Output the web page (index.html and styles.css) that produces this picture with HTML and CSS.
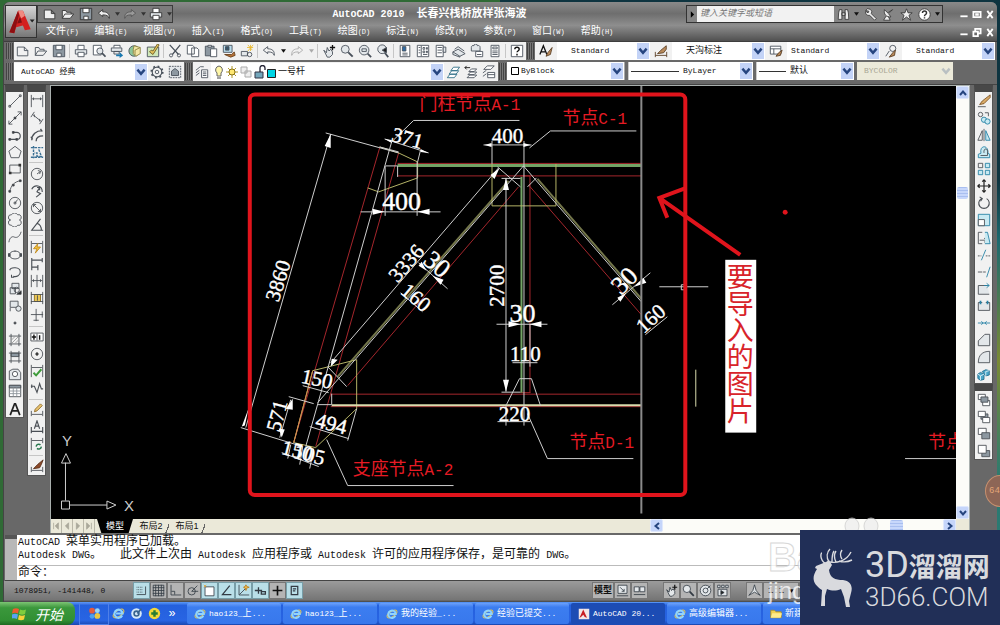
FILE: index.html
```html
<!DOCTYPE html>
<html lang="zh-CN">
<head>
<meta charset="utf-8">
<title>AutoCAD 2010</title>
<link rel="stylesheet" href="styles.css">
</head>
<body>
<svg class="defs" aria-hidden="true">
  <symbol id="new" viewBox="0 0 16 16"><path d="M1.500 3.500h8l4 4v6h-12zM9.500 3.500v4h4"/></symbol>
  <symbol id="open" viewBox="0 0 16 16"><path d="M1.500 13V4h4l1 2h5v2M1.500 13l3-5h10l-4 5z"/></symbol>
  <symbol id="save" viewBox="0 0 16 16"><path class="fg" d="M1.500 1.500h13v13h-13z"/><path class="fw" d="M4.500 1.500h7v5h-7zM5.500 10.500h5v4h-5z"/></symbol>
  <symbol id="print" viewBox="0 0 16 16"><path class="fw" d="M4.500 6V1.500h7V6"/><path class="fl" d="M1.500 6.500h13v5h-13z"/><path class="fw" d="M4.500 9.500h7v5h-7z"/></symbol>
  <symbol id="undo" viewBox="0 0 16 16"><path d="M1.500 7l5-4v2.500c5 0 8 2 7.500 7.500-1-3-3-4-7.500-4V11z"/></symbol>
  <symbol id="redo" viewBox="0 0 16 16"><path d="M14.500 7l-5-4v2.500c-5 0-8 2-7.500 7.500 1-3 3-4 7.500-4V11z"/></symbol>
  <symbol id="dd" viewBox="0 0 6 4"><path d="M0 0h6L3 4z" fill="currentColor" stroke="none"/></symbol>
  <symbol id="chev" viewBox="0 0 10 10"><path d="M2 3l3 3.500L8 3" fill="none" stroke="#26457f" stroke-width="2"/></symbol>
  <symbol id="glass" viewBox="0 0 16 16"><circle class="fl" cx="6" cy="6" r="4.500"/><path d="M9.500 9.500l5 5" stroke-width="2.200"/></symbol>
  <symbol id="layers" viewBox="0 0 16 16"><path class="fw" d="M1.500 14.500l3-4h8l-3 4zM3.500 10.500l3-4h8l-3 4zM5.500 6.500l3-4h7l-3 4z"/></symbol>
  <symbol id="ie" viewBox="0 0 16 16"><ellipse cx="8" cy="8" rx="7.500" ry="3.500" transform="rotate(-35 8 8)" fill="none" stroke="#e9c64b" stroke-width="1.300"/><path d="M12.500 10.500A5 5 0 1 1 13 8H5" fill="none" stroke="#8fd4ff" stroke-width="2.600"/></symbol>
</svg>

<div class="desktop">
<div class="window">
  <header class="title">
    <button class="appbtn" aria-label="应用程序菜单"><svg viewBox="0 0 30 32"><path d="M3 27L12 5h5l8 19-6 1-2-5-7 2-2 6z" fill="#d3201f"/><path d="M3 27L12 5l1 4-5 19z" fill="#8d0f12"/><path d="M12 5h5l2 5-4 3z" fill="#f08a80"/><path d="M11 18l3-7 2 6z" fill="#7c1013"/><path d="M24 14h5l-2.500 3z" fill="#222"/></svg></button>
    <div class="head">
      <div class="captions">
        <div class="qat">
          <button aria-label="新建"><svg><use href="#new"/></svg></button>
          <button aria-label="打开"><svg><use href="#open"/></svg></button>
          <button aria-label="保存"><svg><use href="#save"/></svg></button>
          <button aria-label="放弃"><svg><use href="#undo"/></svg></button>
          <button class="tiny" aria-label="放弃列表"><svg><use href="#dd"/></svg></button>
          <button class="dim" aria-label="重做"><svg><use href="#redo"/></svg></button>
          <button class="tiny" aria-label="重做列表"><svg><use href="#dd"/></svg></button>
          <button aria-label="打印"><svg><use href="#print"/></svg></button>
          <button class="tiny dark" aria-label="自定义"><svg><use href="#dd"/></svg></button>
        </div>
        <h1><span>AutoCAD&nbsp;2010&nbsp;&nbsp;</span>长春兴栈桥放样张海波</h1>
        <div class="info">
          <button class="go" aria-label="搜索选项"><svg viewBox="0 0 6 8"><path d="M1 0l4 4-4 4z" fill="#000"/></svg></button>
          <input type="text" aria-label="搜索" placeholder="键入关键字或短语">
          <button aria-label="搜索"><svg viewBox="0 0 16 16"><path class="fd" d="M2 6l1-4h3v12H1.500zM14 6l-1-4h-3v12h4.500zM6 6h4v3H6z"/></svg></button>
          <button class="tiny" aria-label="范围"><svg><use href="#dd"/></svg></button>
          <button aria-label="速博"><svg viewBox="0 0 16 16"><path class="fd" d="M2 3a4 4 0 0 1 7 4l6 6-2 2-6-6a4 4 0 0 1-5-5l3 2 1-2z"/></svg></button>
          <button aria-label="通讯中心"><svg viewBox="0 0 16 16"><path class="fd" d="M3 2c-1 6 2 9 8 9L8 7l5-5-6 4zM5 10l-3 5h8l-2-4"/></svg></button>
          <button aria-label="收藏夹"><svg viewBox="0 0 16 16"><path class="fd" d="M8 1l2 5h5l-4 3 2 6-5-4-5 4 2-6-4-3h5z"/></svg></button>
          <button aria-label="帮助"><svg viewBox="0 0 16 16"><circle cx="8" cy="8" r="7" fill="#fff" stroke="#333"/><path d="M5.500 6c0-3 5-3 5 0 0 2-2.500 2-2.500 4M8 11.500v1.500" fill="none" stroke="#333" stroke-width="1.800"/></svg></button>
          <button class="tiny" aria-label="帮助列表"><svg><use href="#dd"/></svg></button>
        </div>
        <div class="winctl">
          <button aria-label="最小化"><svg viewBox="0 0 10 10"><path d="M1 7h8"/></svg></button>
          <button aria-label="最大化"><svg viewBox="0 0 10 10"><path d="M1 2h8v6H1zM4 4.500h2v1H4z"/></svg></button>
          <button aria-label="关闭"><svg viewBox="0 0 10 10"><path d="M2 1l6 8M8 1L2 9"/></svg></button>
        </div>
      </div>
      <nav class="menu">
        <button>文件<small>(F)</small></button><button>编辑<small>(E)</small></button><button>视图<small>(V)</small></button><button>插入<small>(I)</small></button><button>格式<small>(O)</small></button><button>工具<small>(T)</small></button><button>绘图<small>(D)</small></button><button>标注<small>(N)</small></button><button>修改<small>(M)</small></button><button>参数<small>(P)</small></button><button>窗口<small>(W)</small></button><button>帮助<small>(H)</small></button>
        <div class="winctl">
          <button aria-label="最小化图形"><svg viewBox="0 0 10 10"><path d="M1 7h8"/></svg></button>
          <button aria-label="还原图形"><svg viewBox="0 0 10 10"><path d="M1 4h5v5H1zM3 3V1h6v5H7"/></svg></button>
          <button aria-label="关闭图形"><svg viewBox="0 0 10 10"><path d="M2 1l6 8M8 1L2 9"/></svg></button>
        </div>
      </nav>
    </div>
  </header>

  <div class="bar">
    <i class="grip"></i>
    <div class="tools">
      <button aria-label="新建"><svg><use href="#new"/></svg></button>
      <button aria-label="打开"><svg><use href="#open"/></svg></button>
      <button aria-label="保存"><svg><use href="#save"/></svg></button>
      <hr>
      <button aria-label="打印"><svg><use href="#print"/></svg></button>
      <button aria-label="打印预览"><svg viewBox="0 0 16 16"><path class="fw" d="M1.500 1.500h9v11h-9z"/><circle class="fl" cx="9" cy="8" r="3.500"/><path d="M11.500 10.500l4 4" stroke-width="2"/></svg></button>
      <button aria-label="发布"><svg viewBox="0 0 16 16"><path class="fw" d="M4.500 4V1.500h7V4"/><path class="fl" d="M1.500 4.500h12v4h-12zM4.500 8.500h6v3h-6z"/><path d="M7 12h4V9l4 4-4 3v-2H7z" fill="#1878b0" stroke="none"/></svg></button>
      <button aria-label="三维"><svg viewBox="0 0 16 16"><circle cx="7" cy="8" r="6" fill="#8cc59a"/><path d="M7 2l7 2v7l-5 3-3-3V6z" fill="#f3e6a4" stroke="#897f3c"/><path d="M8 7l6-3M8 7v6" stroke="#897f3c"/></svg></button>
      <button aria-label="标记"><svg viewBox="0 0 16 16"><path d="M1.500 3.500h13v11h-13z" fill="#cfe7b8"/><path d="M4 9l4 3 7-11-2-1-5 8-2-1z" fill="#e3c35d" stroke="#6d5a25"/></svg></button>
      <hr>
      <button aria-label="剪切"><svg viewBox="0 0 16 16"><path d="M2 1l10 11M14 1L5 12" stroke-width="1.400"/><circle cx="3.500" cy="13" r="1.800"/><circle cx="12.500" cy="13" r="1.800"/></svg></button>
      <button aria-label="复制"><svg viewBox="0 0 16 16"><path class="fw" d="M1.500 1.500h6l2 2v8h-8zM6.500 4.500h6l2 2v8h-8z"/></svg></button>
      <button aria-label="粘贴"><svg viewBox="0 0 16 16"><path class="fg" d="M1.500 2.500h10v11h-10z"/><path class="fw" d="M4.500 1.500h4v2h-4zM7.500 5.500h7v9h-7z"/></svg></button>
      <button aria-label="特性匹配"><svg viewBox="0 0 16 16"><path d="M1.500 1.500h10v8h-10z" fill="#b8dced"/><path d="M4 3h4v4H4z" fill="#37566b"/><path d="M3 12h8l3-3 1 4-5 2z" fill="#b57239" stroke="#68411d"/></svg></button>
      <button aria-label="块编辑器"><svg viewBox="0 0 16 16"><path class="fl" d="M1.500 8.500h7v5h-7z"/><circle cx="11" cy="12" r="2.500"/><path d="M12 1v7M8 4h7M9 1l5 6M15 1L9 8" stroke="#e8b932"/></svg></button>
      <hr>
      <button aria-label="放弃"><svg><use href="#undo"/></svg></button>
      <button class="tiny dark" aria-label="放弃列表"><svg><use href="#dd"/></svg></button>
      <button class="pale" aria-label="重做"><svg><use href="#redo"/></svg></button>
      <button class="tiny pale" aria-label="重做列表"><svg><use href="#dd"/></svg></button>
      <hr>
      <button aria-label="平移"><svg viewBox="0 0 16 16"><path class="fl" d="M2 7l3 3 1-6 2 4 2-2 2 3v3l-3 3H6z"/><path d="M12 1v6M9 4h6" stroke="#111" stroke-width="1.500"/></svg></button>
      <button aria-label="缩放"><svg><use href="#glass"/></svg></button>
      <button aria-label="窗口缩放"><svg viewBox="0 0 16 16"><circle class="fl" cx="7" cy="7" r="5.500"/><path d="M4.500 5.500h5v3h-5z"/><path d="M11 11l4 4" stroke-width="2"/></svg></button>
      <button aria-label="缩放上一个"><svg viewBox="0 0 16 16"><circle class="fl" cx="7" cy="6" r="5"/><path d="M10 10l4 5" stroke-width="2"/><path d="M12 4L7 7l5 3z" fill="#222"/></svg></button>
      <hr>
      <button aria-label="特性"><svg viewBox="0 0 16 16"><path class="fw" d="M2.500 1.500h11v13h-11z"/><path d="M5 3h4v5H5z" fill="#2e6ba5"/><path d="M5 10.500h6M5 12.500h6"/></svg></button>
      <button aria-label="设计中心"><svg viewBox="0 0 16 16"><path class="fw" d="M1.500 1.500h13v13h-13z"/><path d="M6 2v12M3 4h2M3 7h2M3 10h2M8 4h2v2H8zM12 4h1v2h-1zM8 8h2v2H8zM12 8h1v2h-1zM8 12h5"/></svg></button>
      <button aria-label="工具选项板"><svg viewBox="0 0 16 16"><path class="fw" d="M2.500 1.500h8v13h-8z"/><path class="fl" d="M10.500 3.500h3v6h-3zM4 4h5M4 7h5M4 10h5"/></svg></button>
      <button aria-label="图纸集"><svg viewBox="0 0 16 16"><path class="fl" d="M1 9l6-3 8 5-6 3zM3 6l4-3 7 5M1 9v3l8 3v-1"/></svg></button>
      <button aria-label="标记集"><svg viewBox="0 0 16 16"><path class="fl" d="M1.500 4a2 2 0 0 1 3-2 2 2 0 0 1 4 0 2 2 0 0 1 3 2v4h-10z"/><path class="fw" d="M6.500 8.500h8v6h-8zM8 12h5"/></svg></button>
      <button aria-label="计算器"><svg viewBox="0 0 16 16"><path class="fw" d="M3.500 1.500h9v13h-9z"/><path d="M5.500 3.500h5v2h-5zM5 8h6M5 10h6M5 12h6"/></svg></button>
      <hr>
      <button aria-label="帮助"><svg viewBox="0 0 16 16"><path class="fw" d="M1.500 1.500h13v13h-13z"/><path d="M5.500 6c0-3 5-3 5 0 0 2-2.500 2-2.500 3.500M8 11v2" stroke="#111" stroke-width="1.600"/></svg></button>
    </div>
    <i class="grip"></i>
    <div class="tools styles">
      <button aria-label="文字样式"><svg viewBox="0 0 16 16"><path d="M1 12L5 2l4 10M2 9h5" stroke="#111" stroke-width="1.500"/><path class="fb" d="M15 4l-5 6-2 4 5-2z"/></svg></button>
      <label class="combo"><select aria-label="文字样式"><option>Standard</option></select><svg><use href="#chev"/></svg></label>
      <button aria-label="标注样式"><svg viewBox="0 0 16 16"><path class="fb" d="M14 2l-6 5-4 4 7-1 3-4zM1.500 9v6M14.500 9v6M1.500 13h13"/></svg></button>
      <label class="combo cn"><select aria-label="标注样式"><option>天沟标注</option></select><svg><use href="#chev"/></svg></label>
      <button aria-label="表格样式"><svg viewBox="0 0 16 16"><path class="fw" d="M1.500 2.500h12v9h-12zM1.500 5.500h12M5.500 5.500v6"/><path class="fb" d="M15 7l-4 3-3 4 5-1z"/></svg></button>
      <label class="combo near"><select aria-label="表格样式"><option>Standard</option></select><svg><use href="#chev"/></svg></label>
      <button aria-label="多重引线样式"><svg viewBox="0 0 16 16"><path d="M2 14l4-6"/><circle cx="10" cy="5" r="3.500"/><path class="fb" d="M13 7l-3 3-4 5 6-2z"/></svg></button>
      <label class="combo"><select aria-label="多重引线样式"><option>Standard</option></select><svg><use href="#chev"/></svg></label>
    </div>
  </div>

  <div class="bar second">
    <i class="grip"></i>
    <div class="tools">
      <label class="combo work"><select aria-label="工作空间"><option>AutoCAD 经典</option></select><svg><use href="#chev"/></svg></label>
      <button aria-label="工作空间设置"><svg viewBox="0 0 16 16"><circle cx="8" cy="8" r="5.500" stroke-width="1.300"/><circle cx="8" cy="8" r="6.500" stroke-width="2" stroke-dasharray="2 3.100"/><circle cx="8" cy="8" r="2"/></svg></button>
      <button aria-label="我的工作空间"><svg viewBox="0 0 16 16"><path class="fl" d="M1.500 1.500h13v13h-13z" stroke-dasharray="2 1"/><path class="fg" d="M4 7l4-3 4 3v5H4z"/></svg></button>
    </div>
    <i class="grip"></i>
    <div class="tools layers">
      <button aria-label="图层特性"><svg viewBox="0 0 16 16"><path class="fw" d="M1 6l5-4h4M1 9l4-3M1 12l4-3M7.500 5.500h7v9h-7zM9 8h4M9 10h4M9 12h4"/></svg></button>
      <label class="combo layer">
        <svg viewBox="0 0 66 14"><path d="M8 1a4 4 0 0 1 2 7v3H6V8a4 4 0 0 1 2-7z" fill="#fff7a8" stroke="#666"/><path d="M6 13h4" stroke="#444"/><path d="M21 1v12M15 7h12M17 3l8 8M25 3l-8 8" stroke="#b29a2e"/><circle cx="21" cy="7" r="3" fill="#ffe872" stroke="#8a7416"/><path d="M30 2h6v6h-6zM34 6h6v6h-6z" fill="#eee" stroke="#aaa"/><path d="M44 7h8v6h-8z" fill="#73a6bb" stroke="#334"/><path d="M49 7V3a2 2 0 0 1 5 0v2" fill="none" stroke="#223" stroke-width="1.300"/><path d="M56.500 4.500h8v8h-8z" fill="#00d5e5" stroke="#222"/></svg>
        <select aria-label="图层"><option>一号杆</option></select><svg><use href="#chev"/></svg></label>
      <button class="teal" aria-label="置为当前"><svg><use href="#layers"/></svg></button>
      <button aria-label="上一个图层"><svg viewBox="0 0 16 16"><path class="fw" d="M3.500 14.500l3-3h8l-3 3zM4.500 11l3-3h7l-3 3zM5.500 7.500l3-3h6l-3 3z"/><path d="M1 3h6M3 1L1 3l2 2" stroke="#111"/></svg></button>
      <button aria-label="图层状态"><svg viewBox="0 0 16 16"><path class="fw" d="M2 5l4-4h8l-4 4zM1 9l4-3M1 13l4-3M6.500 8.500h8v6h-8zM6.500 11h8"/></svg></button>
    </div>
    <i class="grip"></i>
    <label class="combo color"><svg viewBox="0 0 10 10"><path d="M1.500 1.500h7v7h-7z" fill="#fff" stroke="#000"/></svg><select aria-label="颜色"><option>ByBlock</option></select><svg><use href="#chev"/></svg></label>
    <label class="combo ltype"><i class="rule"></i><select aria-label="线型"><option>ByLayer</option></select><svg><use href="#chev"/></svg></label>
    <label class="combo cn lweight"><i class="rule"></i><select aria-label="线宽"><option>默认</option></select><svg><use href="#chev"/></svg></label>
    <label class="combo off"><select aria-label="打印样式" disabled><option>BYCOLOR</option></select><svg><use href="#chev"/></svg></label>
  </div>

  <main class="work-area">
    <div class="palette draw">
      <button aria-label="直线"><svg viewBox="0 0 16 16"><path d="M2 14L14 2M1 13h2v2H1zM13 1h2v2h-2z"/></svg></button>
      <button aria-label="构造线"><svg viewBox="0 0 16 16"><path d="M1 15L15 1M15 5V1h-4M1 11v4h4"/><path d="M7 7h2v2H7z" fill="#111"/></svg></button>
      <button aria-label="多段线"><svg viewBox="0 0 16 16"><path d="M1 13h9a4 4 0 0 0 0-8H6" stroke-width="1.300"/><path d="M1 12h2v2H1zM9 12h2v2H9zM5 4h2v2H5z" fill="#333"/></svg></button>
      <button aria-label="多边形"><svg viewBox="0 0 16 16"><path d="M8 1.500l7 5.500-2.500 7.500h-9L1 7z"/></svg></button>
      <button aria-label="矩形"><svg viewBox="0 0 16 16"><path d="M2 3.500h12v9H2z"/><path d="M1 11h3v3H1zM12 2h3v3h-3z" fill="#333" stroke="none"/></svg></button>
      <button aria-label="圆弧"><svg viewBox="0 0 16 16"><path d="M2 15C3 7 8 3 14 2"/><path d="M1 13h2v2H1zM5 6h2v2H5zM13 1h2v2h-2z" fill="#333"/></svg></button>
      <button aria-label="圆"><svg viewBox="0 0 16 16"><circle cx="8" cy="8" r="6.500"/><path d="M8 8l3-4M7 7h2v2H7z"/></svg></button>
      <button aria-label="修订云线"><svg viewBox="0 0 16 16"><path d="M3 8a3 3 0 0 1 1-6 4 4 0 0 1 7 0 3 3 0 0 1 2 6 3 3 0 0 1-2 6 4 4 0 0 1-7 0 3 3 0 0 1-1-6z"/></svg></button>
      <button aria-label="样条曲线"><svg viewBox="0 0 16 16"><path d="M1 14c1-6 4-7 6-6s6 1 8-6"/></svg></button>
      <button aria-label="椭圆"><svg viewBox="0 0 16 16"><ellipse cx="8" cy="8" rx="6.500" ry="4.500"/><path d="M1 7h1v2H1zM14 7h1v2h-1zM8 3v1" stroke-width="2"/></svg></button>
      <button aria-label="椭圆弧"><svg viewBox="0 0 16 16"><path d="M2 6c1-4 12-4 12 2 0 4-4 6-8 5M4 11v3h3" stroke-width="1.200"/></svg></button>
      <button aria-label="插入块"><svg viewBox="0 0 16 16"><path class="fl" d="M4.500 1.500h8v6h-8zM2.500 6.500h6v7h-6z"/><circle cx="10" cy="9" r="3"/><path d="M10 14h5v-4z" fill="#222"/></svg></button>
      <button aria-label="创建块"><svg viewBox="0 0 16 16"><path class="fl" d="M2.500 2.500h9v7h-9zM2.500 10v4"/><circle class="fl" cx="12" cy="11" r="3"/></svg></button>
      <button aria-label="点"><svg viewBox="0 0 16 16"><path d="M7 7h2v2H7z" fill="#444"/></svg></button>
      <button aria-label="图案填充"><svg viewBox="0 0 16 16"><path d="M1 3.500h14M1 12.500h14M3.500 1v14M12.500 1v14"/><path d="M4 8l4-4M4 12l8-8M8 12l4-4" stroke="#999"/></svg></button>
      <button aria-label="渐变色"><svg viewBox="0 0 16 16"><path class="fg" d="M3.500 3.500h9v4h-9z"/><path d="M1 3.500h14M1 12.500h14M3.500 1v14M12.500 1v14"/></svg></button>
      <button aria-label="面域"><svg viewBox="0 0 16 16"><path class="fl" d="M1.500 14.500v-10l4-2h6l3 4v8z"/><circle class="fw" cx="8" cy="8" r="3"/></svg></button>
      <button aria-label="表格"><svg viewBox="0 0 16 16"><path class="fw" d="M1.500 1.500h13v13h-13z"/><path class="fg" d="M1.500 1.500h13v3h-13z"/><path d="M1.500 8h13M1.500 11h13M6 4v10M10 4v10" stroke="#8b9299"/></svg></button>
      <button aria-label="多行文字"><svg viewBox="0 0 16 16"><path d="M2.500 15L7.500 2h1l5 13M4.500 10h7" stroke="#222" stroke-width="2"/></svg></button>
    </div>
    <div class="palette dims">
      <button aria-label="线性"><svg viewBox="0 0 16 16"><path d="M1.500 1v14M14.500 1v14M2 5.500h12M4 4v3M12 4v3"/></svg></button>
      <button aria-label="对齐"><svg viewBox="0 0 16 16"><path d="M5 1L1 7M15 9l-4 6M3 4l10 8M5 4v3M11 9v3"/></svg></button>
      <button aria-label="弧长"><svg viewBox="0 0 16 16"><path d="M2 14C2 7 7 3 14 3M7 15c0-4 3-6 8-6M1 10l2 3M12 1l2 3" stroke-width="1.500"/></svg></button>
      <button aria-label="坐标"><svg viewBox="0 0 16 16"><path d="M1 3h14M1 14h14M4 1v14M10 5l3 8H8v-4H5" stroke="#3c7195" stroke-dasharray="3 1" stroke-width="1.600"/></svg></button>
      <hr>
      <button aria-label="半径"><svg viewBox="0 0 16 16"><circle cx="8" cy="8" r="6.500"/><path d="M8 8l4-3M9 4l3 1-1 3"/></svg></button>
      <button aria-label="折弯"><svg viewBox="0 0 16 16"><path d="M2 6c3-6 12-5 12 3M7 15l5-4-4-2 3-5M8 4h3v3" stroke-width="1.300"/></svg></button>
      <button aria-label="直径"><svg viewBox="0 0 16 16"><circle cx="8" cy="8" r="6.500"/><path d="M4 4l8 8M4 7V4h3M9 12h3V9"/></svg></button>
      <button aria-label="角度"><svg viewBox="0 0 16 16"><path d="M12 1L2 14h13M8 6c3 1 5 4 5 8" stroke-width="1.300"/></svg></button>
      <hr>
      <button aria-label="快速标注"><svg viewBox="0 0 16 16"><path d="M1.500 1v14M14.500 1v14M2 4h12"/><path d="M9 4l-5 6h4l-2 5 6-7H8z" fill="#f3c23c" stroke="#c08a1c"/></svg></button>
      <button aria-label="基线"><svg viewBox="0 0 16 16"><path d="M2 1v14M14 1v5M2 3.500h12M9 9v6M2 11.500h7" stroke-width="1.300"/></svg></button>
      <button aria-label="连续"><svg viewBox="0 0 16 16"><path d="M1.500 1v14M8 1v14M14.500 1v14M2 7.500h12M4 6v3M12 6v3"/></svg></button>
      <button aria-label="等距标注"><svg viewBox="0 0 16 16"><path d="M5 4h7v8H5z" fill="#eac756" stroke="#8a6b1b"/><path d="M1.500 1v14M14.500 1v14M1 4h14M1 12h14M8.500 5v6"/></svg></button>
      <button aria-label="折断标注"><svg viewBox="0 0 16 16"><path d="M1 7.500h14M7 1v14M4 14h6M14 4v7"/></svg></button>
      <hr>
      <button aria-label="公差"><svg viewBox="0 0 16 16"><path class="fw" d="M1 3.500h14v9H1zM8 4v8"/><path d="M2 8h5M4.500 5v6M11 6v5" stroke="#111" stroke-width="1.600"/></svg></button>
      <button aria-label="圆心标记"><svg viewBox="0 0 16 16"><circle cx="8" cy="8" r="6.500"/><path d="M8 6v4M6 8h4" stroke="#111" stroke-width="1.400"/></svg></button>
      <button aria-label="检验"><svg viewBox="0 0 16 16"><path d="M1.500 1v14M14.500 1v14M2 4h12"/><path d="M4 10l3 3 6-7" stroke="#3d9b39" stroke-width="2.200"/></svg></button>
      <button aria-label="折弯线性"><svg viewBox="0 0 16 16"><path d="M1 6h4l3 7 3-10 2 6h2M2 4v4" stroke-width="1.300"/></svg></button>
      <hr>
      <button aria-label="编辑标注"><svg viewBox="0 0 16 16"><path d="M1.500 9v6M14.500 9v6M2 13h12"/><path d="M5 10l1-3 6-6 2 2-6 6z" fill="#e9c36f" stroke="#8d6826"/></svg></button>
      <button aria-label="编辑标注文字"><svg viewBox="0 0 16 16"><path d="M1.500 8v7M14.500 8v7M2 13h12M5 10l3-9 3 9M6 7h4" stroke-width="1.300"/></svg></button>
      <button aria-label="标注更新"><svg viewBox="0 0 16 16"><path d="M1.500 1v14M14.500 1v6M2 4h12"/><path d="M7 11a3 3 0 0 1 5-2M13 11a3 3 0 0 1-5 2" stroke="#26754c" stroke-width="1.600"/></svg></button>
      <hr>
      <button aria-label="标注样式"><svg viewBox="0 0 16 16"><path d="M1.500 9v6M14.500 9v6M2 13h12"/><path d="M15 1L9 6l-5 5 7-1 2-4z" fill="#8d4a2b" stroke="#593019"/></svg></button>
    </div>

    <section class="drawing">
      <div class="view">
        <svg class="model" viewBox="50 86 906 433" preserveAspectRatio="xMinYMin meet" role="img" aria-label="栈桥放样图">
          <g class="ln red">
            <path d="M379 148L293 443M398 153L315 447M397 163.500H641M397 176H641M518 187L347 386M528 185L641 315M529.500 176V393M520 176h10M520 393h10M330 394.500H641M330 407H641"/>
          </g>
          <path class="ln green" d="M397 165.500H641" stroke-width="3"/>
          <path class="ln green" d="M521 177V393" stroke-width="2"/>
          <path class="ln olive" d="M508 181L337 377M537 179L641 299" stroke-width="2"/>
          <path class="ln yellow" d="M379 147L398 153L417 162V178L378 192L367 188M491.500 164V206H555.500V164M312 371L356 360V409L315 448L293 443Z"/>
          <path class="ln pale" d="M331 405.500H641" stroke-width="2"/>
          <path class="ln orange" d="M312 371L293 443"/>
          <g class="ln white">
            <path d="M330 134L245 428M325 133L398 153M240 428L302 447M393 140L413 120.500H519M384 139L428 153M391 142L305 447M420 150L417 162M379 147L398 152"/>
            <path d="M385 166H397V177M384.500 166V216M416.500 162V216M360 212H440M498 168L330 363M523 166L317 403M497 167L520 187M327 367L346 387M483 145H531M491.500 141V164M523.500 141V426M529 148L550 131H636M523 166L641 302M536 178L527 187"/>
            <path d="M612 305L650 273M645 335L667 317M505.500 178V392M501 178.500H520M501 392.500H520M496 324.500H547M512 363H537M529.500 324V367M506 405L519 379H531L540 406M497 422H530M505.500 405V426M527 414L547 459H633M905 459H956"/>
            <path d="M302 386L328 393M317 405H331V394M290 400L279 438M288 397L313 404M309 427L348 439M356 409L347 441M326 440L347 486H453M418 263L447 289M400 293L422 312M281 453L318 467M290 445l-3 14M302 447l-3 18M313 449l-4 20"/>
          </g>
          <g class="arrow">
            <path d="M330 134l-6 12 6 2zM384 212l-12-3v6zM417 212l12-3v6zM499 168l-9 7 4 4zM505.500 178l-3 12h6zM505.500 392l-3-12h6zM520 324.500l-12-3v6zM529 324.500l12-3v6zM330 367l1-8 6 1zM626 293l-9 5 3 4zM634 287l9-9 3 5zM426 271l-8-5 3-4zM432 276l8 9 3-5zM292 399l-7 10 7 1zM281 438l-3-9 6 1zM384 139l7 1v3zM428 153l-8-4v3zM484 145l7-2v4zM530 145l-7-2v4zM248 408l-4 18-3 1z"/>
          </g>
          <path class="ln frame" d="M641 86V514"/>
          <path class="ln white" d="M659 287H708M681 285h5v5h-5z"/>
          <path class="ln pale" d="M695.500 370V407"/>
          <g class="num">
            <text class="big" x="401" y="210">400</text>
            <text x="507" y="143">400</text>
            <text transform="translate(405 145) rotate(15)">371</text>
            <text transform="translate(284 283) rotate(-73)">3860</text>
            <text transform="translate(411 268) rotate(-49)">3336</text>
            <text class="big" transform="translate(431 271) rotate(40)">30</text>
            <text transform="translate(411 303) rotate(40)">160</text>
            <text transform="translate(503 286) rotate(-90)">2700</text>
            <text class="big" transform="translate(630 287) rotate(-45)">30</text>
            <text transform="translate(655 324) rotate(-42)">160</text>
            <text class="big" x="522" y="322">30</text>
            <text x="525" y="361">110</text>
            <text x="514" y="421">220</text>
            <text transform="translate(315 386) rotate(12)">150</text>
            <text transform="translate(329 431) rotate(14)">494</text>
            <text transform="translate(283 418) rotate(-75)">571</text>
            <text transform="translate(295 458) rotate(14)">150</text>
            <text transform="translate(307 462) rotate(14)">105</text>
          </g>
          <g class="label">
            <text x="419" y="110">门柱节点<tspan>A-1</tspan></text>
            <text x="562" y="124">节点<tspan>C-1</tspan></text>
            <text x="352" y="475">支座节点<tspan>A-2</tspan></text>
            <text x="569" y="448">节点<tspan>D-1</tspan></text>
            <text x="928" y="448">节点</text>
          </g>
          <g class="ln white">
            <path d="M60.500 501.500h8v8h-8zM64.500 501V463M60.500 463.500h9L65 454zM69 505.500H106M106 501.500v8l9-4z"/>
          </g>
          <text class="axis" x="61" y="446">Y</text><text class="axis" x="123" y="511">X</text>
          <rect class="mark" x="249" y="94.500" width="436" height="401" rx="5"/>
          <path class="mark" d="M740 255L659 198M686 188L659 198L667 218"/>
          <circle cx="785" cy="212.500" r="2.500" fill="#e0141c"/>
          <rect x="725" y="260" width="31" height="173" fill="#fff"/>
          <text class="note" x="740" y="263">要导入的图片</text>
        </svg>
        <div class="vscroll">
          <button class="up" aria-label="向上"><svg><use href="#chev"/></svg></button>
          <i class="thumb"></i>
          <button aria-label="向下"><svg><use href="#chev"/></svg></button>
        </div>
      </div>
      <div class="tabs">
        <div class="nav">
          <button aria-label="第一个"><svg viewBox="0 0 10 10"><path d="M2 1v8M8 1L4 5l4 4z"/></svg></button>
          <button aria-label="上一个"><svg viewBox="0 0 10 10"><path d="M7 1L3 5l4 4z"/></svg></button>
          <button aria-label="下一个"><svg viewBox="0 0 10 10"><path d="M3 1l4 4-4 4z"/></svg></button>
          <button aria-label="最后一个"><svg viewBox="0 0 10 10"><path d="M8 1v8M2 1l4 4-4 4z"/></svg></button>
        </div>
        <button class="tab on">模型</button><button class="tab">布局2</button><button class="tab">布局1</button>
        <div class="hscroll">
          <button class="left" aria-label="向左"><svg><use href="#chev"/></svg></button>
          <i class="thumb"></i>
          <button class="right" aria-label="向右"><svg><use href="#chev"/></svg></button>
        </div>
        <i class="corner"></i>
      </div>
    </section>

    <div class="side">
      <div class="palette modify">
        <button aria-label="删除"><svg viewBox="0 0 16 16"><path d="M15 1L6 8l-3 4 5-1 7-7z" fill="#d9ab68" stroke="#7d5325"/><path d="M1 14.500h9"/></svg></button>
        <button aria-label="复制"><svg viewBox="0 0 16 16"><circle cx="4" cy="4" r="2.500"/><path d="M9 2h4v4"/><circle class="ft" cx="8" cy="10" r="3"/><circle class="ft" cx="12" cy="12" r="3"/></svg></button>
        <button aria-label="镜像"><svg viewBox="0 0 16 16"><path d="M6 3v11H1zM8 1v14"/><path class="ft" d="M10 3v11h5z"/></svg></button>
        <button aria-label="偏移"><svg viewBox="0 0 16 16"><path class="ft" d="M1.500 14.500v-4l3-1c-2-10 9-10 8 0l2 1v4z"/><path d="M4 12h8V9c1-6-5-6-4 0"/></svg></button>
        <button aria-label="阵列"><svg viewBox="0 0 16 16"><path d="M1.500 1.500h5v5h-5z"/><path class="ft" d="M9.500 1.500h5v5h-5zM1.500 9.500h5v5h-5zM9.500 9.500h5v5h-5z"/></svg></button>
        <button aria-label="移动"><svg viewBox="0 0 16 16"><path d="M8 1v14M1 8h14M6 3l2-2 2 2M6 13l2 2 2-2M3 6L1 8l2 2M13 6l2 2-2 2" stroke="#222" stroke-width="1.400"/></svg></button>
        <button aria-label="旋转"><svg viewBox="0 0 16 16"><path d="M5 3a6 6 0 1 0 6 0M3 1l3 2-2 3" stroke-width="1.300"/></svg></button>
        <button aria-label="缩放"><svg viewBox="0 0 16 16"><path class="ft" d="M1.500 1.500h13v13h-13z"/><path class="fw" d="M1.500 7.500h7v7h-7z"/></svg></button>
        <button aria-label="拉伸"><svg viewBox="0 0 16 16"><path d="M6 1.500H1.500v13H6M3 10.500h7M8 8l3 2.500L8 13"/><path class="ft" d="M9 1.500h3l3 13H9"/></svg></button>
        <button aria-label="修剪"><svg viewBox="0 0 16 16"><path d="M1 9h4M10 9h5" stroke-dasharray="2 1"/><path class="tl" d="M10 2L5 14"/></svg></button>
        <button aria-label="延伸"><svg viewBox="0 0 16 16"><path d="M1 8h9" stroke-dasharray="5 1"/><path class="tl" d="M15 2l-4 12"/></svg></button>
        <button aria-label="打断于点"><svg viewBox="0 0 16 16"><path class="fl" d="M12 4H1.500v10H14"/><path class="tl" d="M8 4h6M11 1.500L14 4l-3 2.500"/></svg></button>
        <button aria-label="打断"><svg viewBox="0 0 16 16"><path class="fl" d="M6 4H1.500v9h13V4H10"/><path class="tl" d="M4 2v4M12 2v4" stroke-width="2"/></svg></button>
        <button aria-label="合并"><svg viewBox="0 0 16 16"><path class="tl" d="M1 8h14M5 6l2 2-2 2M11 6L9 8l2 2"/></svg></button>
        <button aria-label="倒角"><svg viewBox="0 0 16 16"><path class="fl" d="M1.500 14.500V9L9 1.500h5.500v13z"/></svg></button>
        <button aria-label="圆角"><svg viewBox="0 0 16 16"><path class="fl" d="M1.500 14.500C1.500 6 6 1.500 14.500 1.500v13z"/></svg></button>
        <button aria-label="分解"><svg viewBox="0 0 16 16"><path class="fs" d="M1 7l3-2 4 2v6l-4 1-3-2zM6 4l4-2 4 1v5l-4 1z"/><path d="M1 7l3 2v5M4 9l4-2M10 4v5M10 4l4-1M14 10l-2 4" stroke="#dff2f8"/></svg></button>
      </div>
      <div class="palette order">
        <button aria-label="前置"><svg viewBox="0 0 16 16"><path class="fw" d="M1.500 1.500h8v6h-8zM6.500 8.500h8v6h-8z"/><path class="fg" d="M4.500 4.500h8v6h-8z"/></svg></button>
        <button aria-label="后置"><svg viewBox="0 0 16 16"><path class="fg" d="M4.500 4.500h8v6h-8z"/><path class="fw" d="M1.500 1.500h8v6h-8zM6.500 8.500h8v6h-8z"/></svg></button>
        <button aria-label="置于对象之上"><svg viewBox="0 0 16 16"><path class="fw" d="M1.500 1.500h9v7h-9z"/><path class="fg" d="M5.500 6.500h9v7h-9z"/></svg></button>
        <button aria-label="置于对象之下"><svg viewBox="0 0 16 16"><path class="fg" d="M5.500 7.500h9v7h-9z"/><path class="fw" d="M1.500 1.500h9v9h-9z"/></svg></button>
      </div>
    </div>
  </main>

  <section class="command">
    <i class="handle"></i>
    <div class="lines">
      <p><span>AutoCAD </span>菜单实用程序已加载。</p>
      <p><span>Autodesk DWG</span>。<span>&nbsp;&nbsp; </span>此文件上次由<span> Autodesk </span>应用程序或<span> Autodesk </span>许可的应用程序保存，是可靠的<span> DWG</span>。</p>
      <label class="prompt">命令：<input type="text" aria-label="命令"></label>
    </div>
  </section>

  <footer class="status">
    <span class="coords">1078951, -141448, 0</span>
    <div class="toggles">
      <button class="on" aria-label="捕捉"><svg viewBox="0 0 16 16"><path d="M2 4h8M2 7h8M2 10h8" stroke-dasharray="1 1"/><path d="M13 3v10M2 13h11"/></svg></button>
      <button aria-label="栅格"><svg viewBox="0 0 16 16"><path d="M1.500 1.500h13v13h-13zM4.500 1v14M8 1v14M11.500 1v14M1 4.500h14M1 8h14M1 11.500h14"/></svg></button>
      <button aria-label="正交"><svg viewBox="0 0 16 16"><path d="M2.500 1v12.500H15M3 9h4v4"/></svg></button>
      <button aria-label="极轴"><svg viewBox="0 0 16 16"><circle cx="7" cy="9" r="4.500"/><path d="M7 9l7-7M7 9h8"/></svg></button>
      <button class="on" aria-label="对象捕捉"><svg viewBox="0 0 16 16"><path class="fw" d="M2.500 3.500h11v11h-11z"/><path d="M1 1l3 3M4 1L1 4" stroke="#d89d35"/></svg></button>
      <button class="on" aria-label="对象追踪"><svg viewBox="0 0 16 16"><path d="M12 2L3 13h11" stroke-width="1.500"/></svg></button>
      <button class="on" aria-label="动态UCS"><svg viewBox="0 0 16 16"><path d="M2.500 1v12.500H15M3 13L11 5"/><path d="M11 1l1 2 3 1-3 1-1 3-1-3-2-1 2-1z" fill="#f4bc45" stroke="#b57a1d"/></svg></button>
      <button class="on" aria-label="动态输入"><svg viewBox="0 0 16 16"><path d="M1 8h9M5.500 4v8M9 9.500h5v3H9z" stroke-width="1.600"/></svg></button>
      <button aria-label="线宽"><svg viewBox="0 0 16 16"><path d="M2 8h12M8 2v12" stroke="#111" stroke-width="2"/></svg></button>
      <button class="on" aria-label="快捷特性"><svg viewBox="0 0 16 16"><path d="M4 3h8v10H4zM6 6h4M6 8.500h3" stroke-width="1.500"/></svg></button>
    </div>
    <div class="toggles space">
      <button class="txt">模型</button>
      <button aria-label="布局"><svg viewBox="0 0 16 16"><path class="fl" d="M2.500 1.500h11v10h-11zM1 14.500h14M5 4l5 5M10 9V6M10 9H7"/></svg></button>
      <button aria-label="快速查看布局"><svg viewBox="0 0 16 16"><path class="fl" d="M1.500 3.500h6v6h-6zM8.500 3.500h6v6h-6zM1 13h14"/></svg></button>
    </div>
    <div class="toggles zoom">
      <button aria-label="平移"><svg viewBox="0 0 16 16"><path class="fl" d="M2 7l3 3 1-6 2 4 2-2 2 3v3l-3 3H6z"/><path d="M12 1v6M9 4h6" stroke="#111" stroke-width="1.500"/></svg></button>
      <button aria-label="缩放"><svg><use href="#glass"/></svg></button>
      <button aria-label="控制盘"><svg viewBox="0 0 16 16"><circle class="fl" cx="8" cy="8" r="6.500"/><circle cx="8" cy="8" r="3"/><path d="M10 6l4-4"/></svg></button>
      <button aria-label="运动显示器"><svg viewBox="0 0 16 16"><path class="fl" d="M2.500 6.500h11v8h-11zM2 1.500h3v3H2zM7 1.500h3v3H7zM12 1.500h3v3h-3z"/><path d="M6 8l4 2.500L6 13z" fill="#222"/></svg></button>
    </div>
    <div class="toggles anno">
      <button aria-label="注释比例"><svg viewBox="0 0 16 16"><path class="fl" d="M8 1L6 8l-5 6 7-4 7 4-5-6z"/></svg></button>
      <button class="txt scale">1:1<svg><use href="#dd"/></svg></button>
      <button aria-label="注释可见性"><svg viewBox="0 0 16 16"><path class="fl" d="M6 2L4 8l-3 5 5-3 5 3-3-5z"/><circle cx="12" cy="5" r="3" fill="#f4d568"/></svg></button>
    </div>
  </footer>
</div>
<aside class="badge">64</aside>
</div>

<nav class="taskbar">
  <button class="start"><svg viewBox="0 0 16 16"><path d="M1 3c2-1 4-1 6 0L6 7.500c-2-1-4-1-6 0z" fill="#ef5a30"/><path d="M8 3.500c2 1 4 1 6 0L13 8c-2 1-4 1-6 0z" fill="#7fce3e"/><path d="M0 8.500c2-1 4-1 6 0L5 13c-2-1-4-1-6 0z" fill="#58a3f4"/><path d="M7 9c2 1 4 1 6 0l-1 4.500c-2 1-4 1-6 0z" fill="#f8d239"/></svg>开始</button>
  <div class="quick">
    <button class="boxed" aria-label="启动"><svg viewBox="0 0 16 16"><circle cx="5" cy="4.500" r="3.500" fill="#e35b3c"/><circle cx="11.500" cy="4.500" r="3" fill="#9ad6f5"/><circle cx="5" cy="11.500" r="3" fill="#4ba1ef"/><circle cx="11.500" cy="11" r="3.500" fill="#e9c743"/></svg></button>
    <button aria-label="Internet Explorer"><svg><use href="#ie"/></svg></button>
    <button aria-label="搜索引擎"><svg viewBox="0 0 16 16"><circle cx="8" cy="8" r="6.500" fill="#d6e9f8"/><circle cx="8" cy="8" r="3" fill="none" stroke="#38638e" stroke-width="2"/><path d="M9 8l5-6" stroke="#38638e" stroke-width="2"/></svg></button>
    <button aria-label="安全卫士"><svg viewBox="0 0 16 16"><circle cx="8" cy="8" r="7" fill="#f2d73a"/><path d="M8 4v8M4 8h8" stroke="#267c33" stroke-width="3"/></svg></button>
    <button class="more">»</button>
  </div>
  <div class="tasks">
    <button><svg><use href="#ie"/></svg><span><small>hao123_</small>上<small>...</small></span></button>
    <button><svg><use href="#ie"/></svg><span><small>hao123_</small>上<small>...</small></span></button>
    <button><svg><use href="#ie"/></svg><span>我的经验<small>_...</small></span></button>
    <button><svg><use href="#ie"/></svg><span>经验已提交<small>...</small></span></button>
    <button class="active"><svg viewBox="0 0 16 16"><path d="M1 1h14v14H1z" fill="#f4e7e7"/><path d="M2 13L7 2l5 11-3-1-2-3-3 3z" fill="#c91e24"/></svg><span><small>AutoCAD 20...</small></span></button>
    <button><svg><use href="#ie"/></svg><span>高级编辑器<small>...</small></span></button>
    <button><svg viewBox="0 0 16 16"><path d="M1 13V3h5l2 2h7v8z" fill="#f2d253" stroke="#a88923"/><path d="M1 13l2-6h13l-2 6z" fill="#ffeb8d"/></svg><span>新建</span></button>
    <i class="tray"></i>
  </div>
</nav>

<div class="ghost" aria-hidden="true">
  <svg viewBox="0 0 40 16"><ellipse cx="10" cy="9" rx="7" ry="8"/><ellipse cx="29" cy="9" rx="7" ry="8"/></svg>
  <b>Ba</b><em>jing</em>
</div>
<aside class="brand">
  <svg viewBox="0 0 44 60"><path d="M16 16C8 15 8 5 10 5M17 14C14 9 15 4 18 1M18 14c6 1 16 0 21-10M24 14c-2-4-2-8 0-11M30 11c-2-3-2-6 0-9M27 13c6 2 11 0 13-1M20 14c0-4 0-8 2-11" fill="none" stroke="#d9dade" stroke-width="1.400"/><path d="M4 18l10-4 3-2 3 5-3 5c1 8 6 10 14 10 8 1 10 7 8 13l-2 8 1 6h-4l-2-10-3-8c-5 2-9 2-14 0l-2 7v10H9l1-16C1 36-1 30 5 21l-2-1z" fill="#d9dade"/></svg>
  <div><strong><span>3D</span>溜溜网</strong><b>3D66.COM</b></div>
</aside>
</body>
</html>
```
FILE: styles.css
```css
* { box-sizing: border-box; }

body {
  margin: 0;
  min-height: 100vh;
  display: flex;
  flex-direction: column;
  position: relative;
  overflow: hidden;
  font: 9px/12px "Liberation Mono", "Noto Sans CJK SC", monospace;
  color: #111;
}

button, input, select {
  font: inherit;
  color: inherit;
  border: 0;
  margin: 0;
  padding: 0;
  background: none;
  border-radius: 0;
}

button { display: flex; align-items: center; justify-content: center; flex: none; }
p, h1 { margin: 0; }
svg { display: block; flex: none; }
.defs { position: absolute; width: 0; height: 0; }

.fw { fill: #fff; }
.fl { fill: #e3e7ea; }
.fg { fill: #8d98a1; }
.fd { fill: #eee; stroke: #333; }
.fb { fill: #b98a5a; stroke: #5a3f25; }
.ft { fill: #c8e9f2; stroke: #2581a5; }
.fs { fill: #4aa6c8; stroke: #1f6c8e; }
.tl { fill: none; stroke: #2581a5; }

/* Desktop and application window */
.desktop {
  flex: 1;
  display: flex;
  position: relative;
  padding: 2px 3px 0;
  background: linear-gradient(90deg, #2f6a35 0 50%, transparent 50%), linear-gradient(#0e3440 0 30%, #1d6a6f 40%, #7a8a35 60%, #2a7a72 80%);
}
.window {
  flex: 1;
  display: flex;
  flex-direction: column;
  min-width: 0;
  background: #686868;
  border-radius: 6px 6px 0 0;
  border-left: 1px solid #444;
}

.title {
  display: flex;
  padding: 3px 2px 0 1px;
  height: 39px;
  background: linear-gradient(#8a8a8a, #6e6e6e 30%, #8e8e8e 60%, #505050);
  border-radius: 6px 6px 0 0;
}
.appbtn {
  width: 32px;
  height: 33px;
  border: 1px solid #333;
  background: linear-gradient(#d5d5d5, #777);
}
.appbtn svg { width: 30px; height: 31px; }
.head { flex: 1; min-width: 0; }
.captions { display: flex; align-items: center; height: 18px; }
.qat { display: flex; align-items: center; height: 18px; width: 136px; padding-left: 3px; border: 1px solid #3c3c3c; background: #7c7c7c; }
.qat button { width: 18px; color: #333; }
.qat svg { width: 14px; height: 14px; fill: #eee; stroke: #333; }
.qat .dim svg { fill: #999; stroke: #555; }
.qat button.tiny { width: 8px; }
.qat button.tiny svg, .info button.tiny svg, .tools button.tiny svg { width: 5px; height: 4px; }
h1 { flex: 1; text-align: center; font-size: 11px; line-height: 16px; font-weight: 700; color: #fff; white-space: nowrap; }
h1 span { font-size: 10px; }
.info { display: flex; align-items: center; width: 257px; height: 18px; border: 1px solid #333; background: #858585; }
.info button { width: 18px; }
.info button.tiny { width: 9px; }
.info button.go { width: 10px; }
.info svg { width: 13px; height: 13px; }
.info .go svg { width: 5px; height: 7px; }
.info input { flex: 1; min-width: 0; height: 16px; padding-left: 3px; background: #f2f2f2; font-style: italic; font-size: 9px; }
.info input::placeholder { color: #777; }
.winctl { display: flex; gap: 3px; margin-left: 16px; }
.winctl button { width: 10px; height: 12px; }
.winctl svg { width: 10px; height: 9px; fill: none; stroke: #fff; stroke-width: 2; }
.menu { display: flex; gap: 16px; align-items: center; height: 18px; padding-left: 9px; color: #fff; }
.menu button { font-size: 10px; }
.menu small { font-size: 7px; }
.menu .winctl { margin-left: auto; }

/* Horizontal toolbars */
.bar { display: flex; height: 20px; padding: 0 2px 1px 1px; background: #6a6a6a; border-top: 1px solid #3d3d3d; }
.bar.second { margin: 1px 42px 2px 0; border-top: 0; height: 20px; }
.grip { flex: none; width: 7px; margin: 1px 1px; background: repeating-linear-gradient(90deg, #444 0 1px, #777 1px 2px); }
.tools { display: flex; align-items: center; background: #f1f1f1; }
.tools button { width: 18px; }
.tools button.tiny { width: 10px; }
.tools svg { width: 14px; height: 14px; fill: none; stroke: #48505a; }
.tools .pale { color: #aaa; }
.tools .pale svg { stroke: #aaa; }
.tools .teal svg { stroke: #2d6d85; }
hr { width: 1px; height: 14px; margin: 0 2px 0 1px; border: 0; background: #c6c6c6; flex: none; }
.styles { flex: 1; }
.styles button { width: 22px; }
.styles .combo { flex: 1; }
.combo { display: flex; align-items: center; min-width: 0; height: 18px; background: #fff; }
.combo select { flex: 1; min-width: 0; height: 18px; appearance: none; padding-left: 14px; font-size: 8px; color: #111; opacity: 1; }
.combo.cn select { font-size: 9px; }
.combo.near select { padding-left: 4px; }
.combo > svg:last-child { width: 12px; height: 16px; background: #c3d3f7; margin-right: 1px; }
.work { width: 134px; }
.work select { padding-left: 7px; }
.layers { flex: 1; }
.combo.layer { flex: 1; }
.combo.layer svg:first-child { width: 66px; height: 14px; stroke: none; }
.combo.layer select { padding-left: 1px; font-size: 9px; }
.color { width: 118px; padding-left: 3px; border-right: 1px solid #aaa; }
.color svg:first-child { width: 10px; height: 10px; }
.color select { padding-left: 1px; }
.ltype, .lweight { margin-left: 3px; border-left: 1px solid #ccc; }
.ltype { width: 125px; }
.lweight { width: 98px; }
.rule { height: 1px; background: #333; width: 48px; margin-left: 2px; }
.lweight .rule { width: 27px; }
.ltype select, .lweight select { padding-left: 4px; }
.combo.off { width: 96px; margin-left: 3px; background: #eceada; }
.combo.off select { padding-left: 7px; color: #a9a795; }
.combo.off > svg:last-child { background: none; opacity: .25; }

/* Work area */
.work-area { flex: 1; display: flex; align-items: flex-start; padding-left: 1px; border-top: 1px solid #444; }
.palette {
  display: flex;
  flex-direction: column;
  width: 19px;
  margin-right: 3px;
  background: #f1f1f1;
  border: 1px solid #555;
  border-top: 7px solid #484848;
}
.palette button { flex: 1 1 17px; }
.palette svg { width: 14px; height: 14px; fill: none; stroke: #4a4f55; }
.palette hr { width: 14px; height: 1px; margin: 2px 1px; }
.draw { min-height: 333px; }
.dims { min-height: 391px; }
.modify { min-height: 299px; }
.order { min-height: 76px; }
.side .palette { margin-right: 4px; }
.drawing { flex: 1; align-self: stretch; min-width: 0; display: flex; flex-direction: column; border: 1px solid #a9b0ae; border-width: 1px 1px 0 1px; margin: 0 4px 0 1px; }
.view { flex: 1; display: flex; min-height: 0; background: #000; }
.model { flex: 1; min-width: 0; height: 100%; min-height: 433px; }
.vscroll { width: 13px; display: flex; flex-direction: column; background: #fcfcf8; }
.vscroll button, .hscroll button { width: 13px; height: 13px; background: #c5d5fa; border: 1px solid #dfe8fc; border-radius: 2px; }
.vscroll svg, .hscroll svg { width: 10px; height: 10px; }
.up svg { transform: rotate(180deg); }
.left svg { transform: rotate(90deg); }
.right svg { transform: rotate(-90deg); }
.thumb { background: repeating-linear-gradient(#a9bff0 0 1px, #c7d7fb 1px 3px); border-radius: 2px; }
.vscroll .thumb { height: 12px; margin: 88px 1px auto; }

.tabs { display: flex; height: 14px; background: #ebe9d9; }
.nav { display: flex; width: 46px; }
.nav button { width: 11px; border-right: 1px solid #b9b7a8; }
.nav svg { width: 8px; height: 8px; fill: #aaa89a; stroke: #aaa89a; }
.tab { width: 36px; font: 9px/13px "Liberation Sans", "Noto Sans CJK SC", sans-serif; }
.tab + .tab { background: linear-gradient(110deg, transparent 91%, #666 91% 94%, transparent 94%); }
.tab.on { background: #000; color: #fff; clip-path: polygon(0 0, 100% 0, 88% 100%, 12% 100%); }
.hscroll { display: flex; flex: 0 1 306px; margin-left: auto; background: #fcfcf8; }
.hscroll .thumb { width: 13px; margin: 1px 40px 1px auto; }
.corner { width: 13px; }

/* Drawing entities */
.ln { fill: none; }
.red { stroke: #a5262c; }
.green { stroke: #72a465; }
.olive { stroke: #73764a; }
.yellow { stroke: #b5b467; }
.orange { stroke: #d58a4a; }
.pale { stroke: #d9dcae; }
.white { stroke: #cfcfcf; }
.frame { stroke: #8a8a8a; stroke-width: 2; }
.arrow { fill: #fff; }
.num { fill: #fff; font: 21px "Liberation Serif", serif; text-anchor: middle; stroke: #fff; stroke-width: .4; }
.num .big { font-size: 26px; }
.label { fill: #e51b24; font: 18px "Noto Sans CJK SC", sans-serif; }
.label tspan { font: 16px "Liberation Mono", monospace; }
.axis { fill: #ccc; font: 15px "Liberation Sans", sans-serif; }
.mark { fill: none; stroke: #e0141c; stroke-width: 4; }
.note { fill: #d8232a; font: 27px "Noto Sans CJK SC", sans-serif; writing-mode: vertical-rl; }

/* Command line */
.command { display: flex; height: 46px; margin: 2px 0 0 1px; background: #fff; border-bottom: 1px solid #444; }
.handle { width: 12px; background: linear-gradient(#555 0 4px, #b8b8b8 4px); }
.lines { flex: 1; display: flex; flex-direction: column; padding: 1px 0 0 1px; font-size: 12px; line-height: 13px; }
.lines p { white-space: pre; }
.lines span { font-size: 10px; }
.prompt { display: flex; align-items: center; margin-top: 3px; border-top: 1px solid #bbb; height: 15px; }
.prompt input { flex: 1; }

/* Status bar */
.status { display: flex; height: 21px; padding: 1px 0 0 10px; background: linear-gradient(#9b9b9b, #757575 90%, #444); }
.coords { width: 119px; font-size: 8px; line-height: 18px; white-space: pre; }
.toggles { display: flex; height: 17px; }
.toggles button { width: 17px; border: 1px solid #777; background: #b4b4b4; }
.toggles button.on { background: #b9dfe8; border-color: #789ea8; }
.toggles svg { width: 13px; height: 13px; fill: none; stroke: #333b44; }
.space { margin-left: auto; }
.toggles .txt { width: 22px; font-weight: 700; }
.zoom { margin-left: 15px; }
.anno { margin: 0 181px 0 15px; }
.toggles .txt.scale { width: 36px; font-weight: 400; gap: 5px; }
.scale svg { width: 5px; height: 4px; }

/* Windows taskbar */
.taskbar { display: flex; height: 23px; background: linear-gradient(#5c9af7, #2460dd 15%, #2864e3 80%, #1a48b0); color: #fff; }
.start {
  width: 75px;
  gap: 7px;
  font: italic 14px/20px "Noto Sans CJK SC", sans-serif;
  background: linear-gradient(#7dc474, #3b983c 25%, #318f33 80%, #1e6a22);
  border-radius: 0 8px 8px 0;
}
.start svg { width: 16px; height: 16px; }
.quick { display: flex; align-items: center; width: 112px; padding-left: 4px; }
.quick button { width: 18px; height: 22px; }
.quick svg { width: 13px; height: 13px; }
.quick button.boxed { width: 30px; border: 1px solid #4f80e8; }
.quick button.more { font-size: 12px; }
.tasks { flex: 1; display: flex; gap: 2px; padding: 1px 0; min-width: 0; }
.tasks button { flex: 0 1 94px; min-width: 0; justify-content: flex-start; padding-left: 7px; gap: 3px; background: linear-gradient(#6ba0fa, #3c7df0 20%, #3878ec); border-radius: 2px; white-space: nowrap; }
.tasks button.active { background: #1c4cb4; }
.tasks svg { width: 12px; height: 12px; }
.tasks small { font-size: 8px; }
.tray { flex: 1; }

/* Overlays */
.badge { position: absolute; right: -15px; top: 475px; width: 30px; height: 32px; padding-left: 3px; line-height: 30px; border-radius: 50%; background: #8d6656; border: 1px solid #c6906f; color: #e2a577; }
.ghost { position: absolute; right: 110px; bottom: 20px; width: 122px; height: 88px; color: #fff; font-family: "Liberation Sans", sans-serif; opacity: .75; }
.ghost svg { width: 40px; height: 16px; margin-left: 74px; fill: #eee; stroke: #ccc; }
.ghost b, .ghost em { display: block; font-style: normal; }
.ghost b { font-size: 40px; line-height: 48px; color: #fff; -webkit-text-stroke: 1px #ccc; }
.ghost em { font-size: 24px; line-height: 20px; }
.brand { position: absolute; right: 0; bottom: 0; width: 200px; height: 95px; display: flex; align-items: center; gap: 9px; padding-left: 12px; background: #212f57; color: #d9dade; }
.brand svg { width: 44px; height: 60px; }
.brand strong, .brand b { display: block; font-weight: 400; white-space: nowrap; }
.brand strong { font: 700 27px/38px "Noto Sans CJK SC", sans-serif; }
.brand span { font: 36px/38px Roboto, sans-serif; }
.brand b { font: 300 26px/24px Roboto, sans-serif; }
```
